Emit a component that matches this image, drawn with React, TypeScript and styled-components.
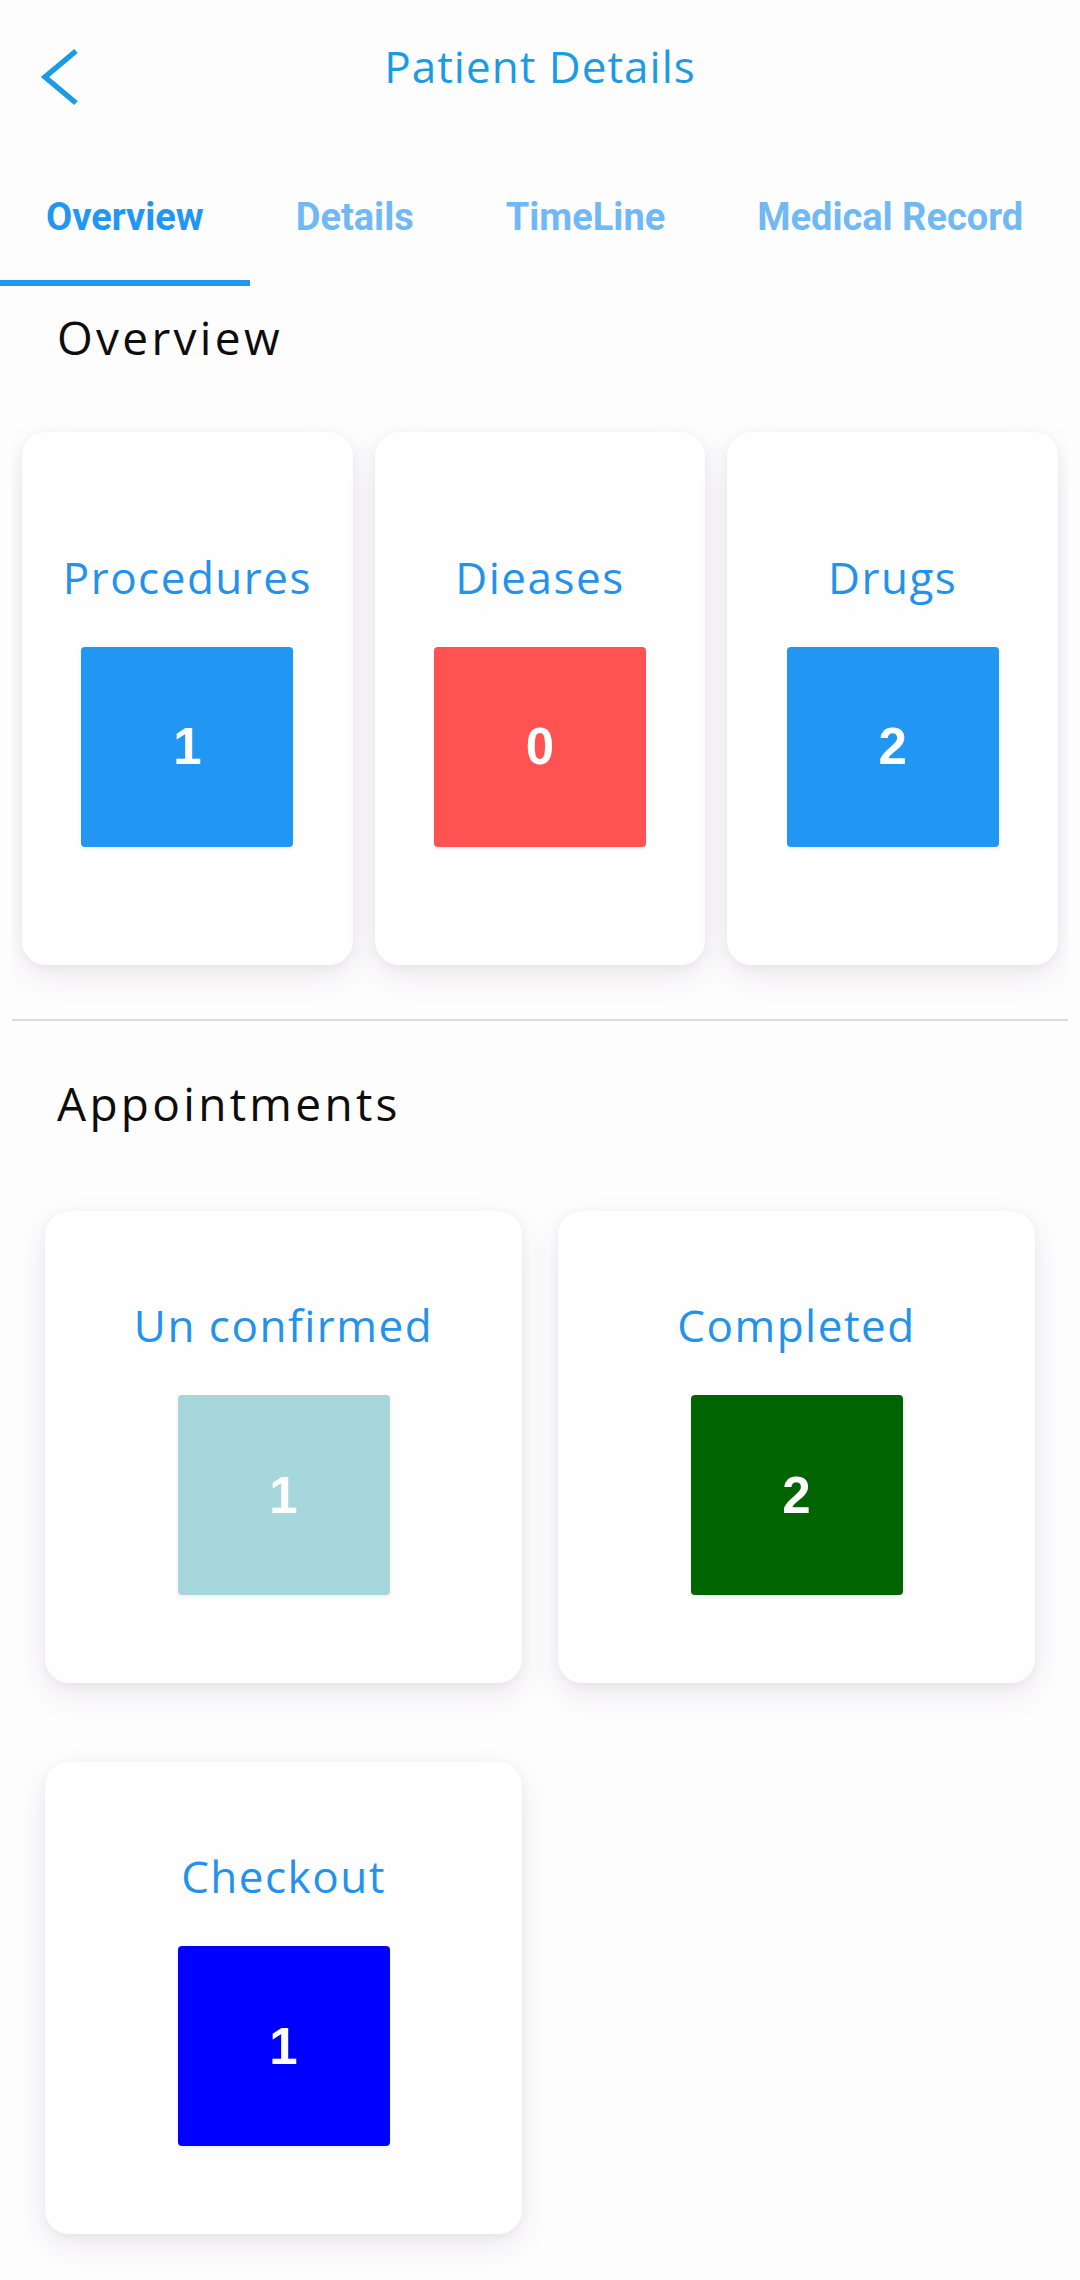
import React from 'react';
import styled, { createGlobalStyle } from 'styled-components';

const GlobalStyle = createGlobalStyle`
  html, body {
    margin: 0;
    padding: 0;
    background: #fefdfe;
  }
  #root {
    min-height: 2280px;
    background: #fefdfe;
  }
  * {
    box-sizing: border-box;
  }
`;

const Page = styled.div`
  width: 1080px;
  min-height: 2280px;
  background: #fefdfe;
  font-family: 'Open Sans', 'Noto Sans', sans-serif;
`;

const Header = styled.header`
  display: grid;
  grid-template-columns: 130px 1fr 130px;
  align-items: start;
  height: 136px;
  padding-top: 40px;
`;

const BackButton = styled.button`
  margin: 7px 0 0 40px;
  padding: 0;
  width: 40px;
  height: 60px;
  border: none;
  background: transparent;
  cursor: pointer;
`;

const Title = styled.h1`
  margin: 0;
  text-align: center;
  font-size: 44px;
  line-height: 53px;
  font-weight: 400;
  letter-spacing: 1px;
  color: #1b9be3;
`;

const TabBar = styled.nav`
  display: flex;
  height: 150px;
  overflow: hidden;
`;

const Tab = styled.div<{ $active?: boolean }>`
  flex: none;
  height: 150px;
  padding: 62px 46px 0;
  font-family: Roboto, 'Liberation Sans', sans-serif;
  font-weight: 700;
  font-size: 38px;
  line-height: 38px;
  white-space: nowrap;
  color: ${p => (p.$active ? '#2196f3' : '#70b9f4')};
  border-bottom: 6px solid ${p => (p.$active ? '#2196f3' : 'transparent')};
`;

const SectionTitle = styled.h2<{ $top: number }>`
  margin: ${p => p.$top}px 0 0 57px;
  font-size: 46px;
  line-height: 53px;
  font-weight: 400;
  letter-spacing: 3.3px;
  color: #0d0d0d;
`;

const OverviewStrip = styled.div`
  display: flex;
  gap: 22px;
  margin: 8px 12px 0;
  padding: 60px 10px 40px;
  overflow: hidden;
`;

const Divider = styled.hr`
  margin: 14px 12px 0;
  height: 2px;
  border: none;
  background: #dcdcdc;
`;

const AppointmentGrid = styled.div`
  display: grid;
  grid-template-columns: 1fr 1fr;
  column-gap: 36px;
  row-gap: 79px;
  padding: 0 45px;
  margin-top: 81px;
`;

const Card = styled.div<{ $height: number }>`
  flex: 1;
  height: ${p => p.$height}px;
  display: flex;
  flex-direction: column;
  align-items: center;
  justify-content: center;
  background: #fffeff;
  border-radius: 24px;
  box-shadow: 0 12px 30px rgba(40, 30, 60, 0.09), 0 2px 10px rgba(40, 30, 60, 0.05);
`;

const CardLabel = styled.div`
  font-size: 44px;
  line-height: 53px;
  font-weight: 400;
  letter-spacing: 1.5px;
  color: #2392ea;
  white-space: nowrap;
`;

const CountBox = styled.div<{ $color: string }>`
  margin-top: 43px;
  width: 212px;
  height: 200px;
  display: flex;
  align-items: center;
  justify-content: center;
  border-radius: 4px;
  background: ${p => p.$color};
  box-shadow: 0 2px 4px rgba(0, 0, 0, 0.06);
  font-family: 'Liberation Sans', Arial, sans-serif;
  font-weight: 700;
  font-size: 51px;
  color: #ffffff;
`;

interface StatProps {
  label: string;
  count: number;
  color: string;
  height: number;
}

const StatCard: React.FC<StatProps> = ({ label, count, color, height }) => (
  <Card $height={height}>
    <CardLabel>{label}</CardLabel>
    <CountBox $color={color}>{count}</CountBox>
  </Card>
);

const tabs = ['Overview', 'Details', 'TimeLine', 'Medical Record'];

const overview = [
  { label: 'Procedures', count: 1, color: '#2196f3' },
  { label: 'Dieases', count: 0, color: '#ff5252' },
  { label: 'Drugs', count: 2, color: '#2196f3' },
];

const appointments = [
  { label: 'Un confirmed', count: 1, color: '#a6d7da' },
  { label: 'Completed', count: 2, color: '#006400' },
  { label: 'Checkout', count: 1, color: '#0000ff' },
];

const App: React.FC = () => (
  <Page>
    <GlobalStyle />
    <Header>
      <BackButton aria-label="Back">
        <svg width="40" height="60" viewBox="0 0 40 60">
          <polyline
            points="36,4 5,30 36,56"
            fill="none"
            stroke="#1b9be3"
            strokeWidth="5.5"
            strokeLinecap="butt"
          />
        </svg>
      </BackButton>
      <Title>Patient Details</Title>
      <div />
    </Header>

    <TabBar>
      {tabs.map((t, i) => (
        <Tab key={t} $active={i === 0}>
          {t}
        </Tab>
      ))}
    </TabBar>

    <SectionTitle $top={25}>Overview</SectionTitle>
    <OverviewStrip>
      {overview.map(s => (
        <StatCard key={s.label} {...s} height={533} />
      ))}
    </OverviewStrip>
    <Divider />

    <SectionTitle $top={56}>Appointments</SectionTitle>
    <AppointmentGrid>
      {appointments.map(s => (
        <StatCard key={s.label} {...s} height={472} />
      ))}
    </AppointmentGrid>
  </Page>
);

export default App;
